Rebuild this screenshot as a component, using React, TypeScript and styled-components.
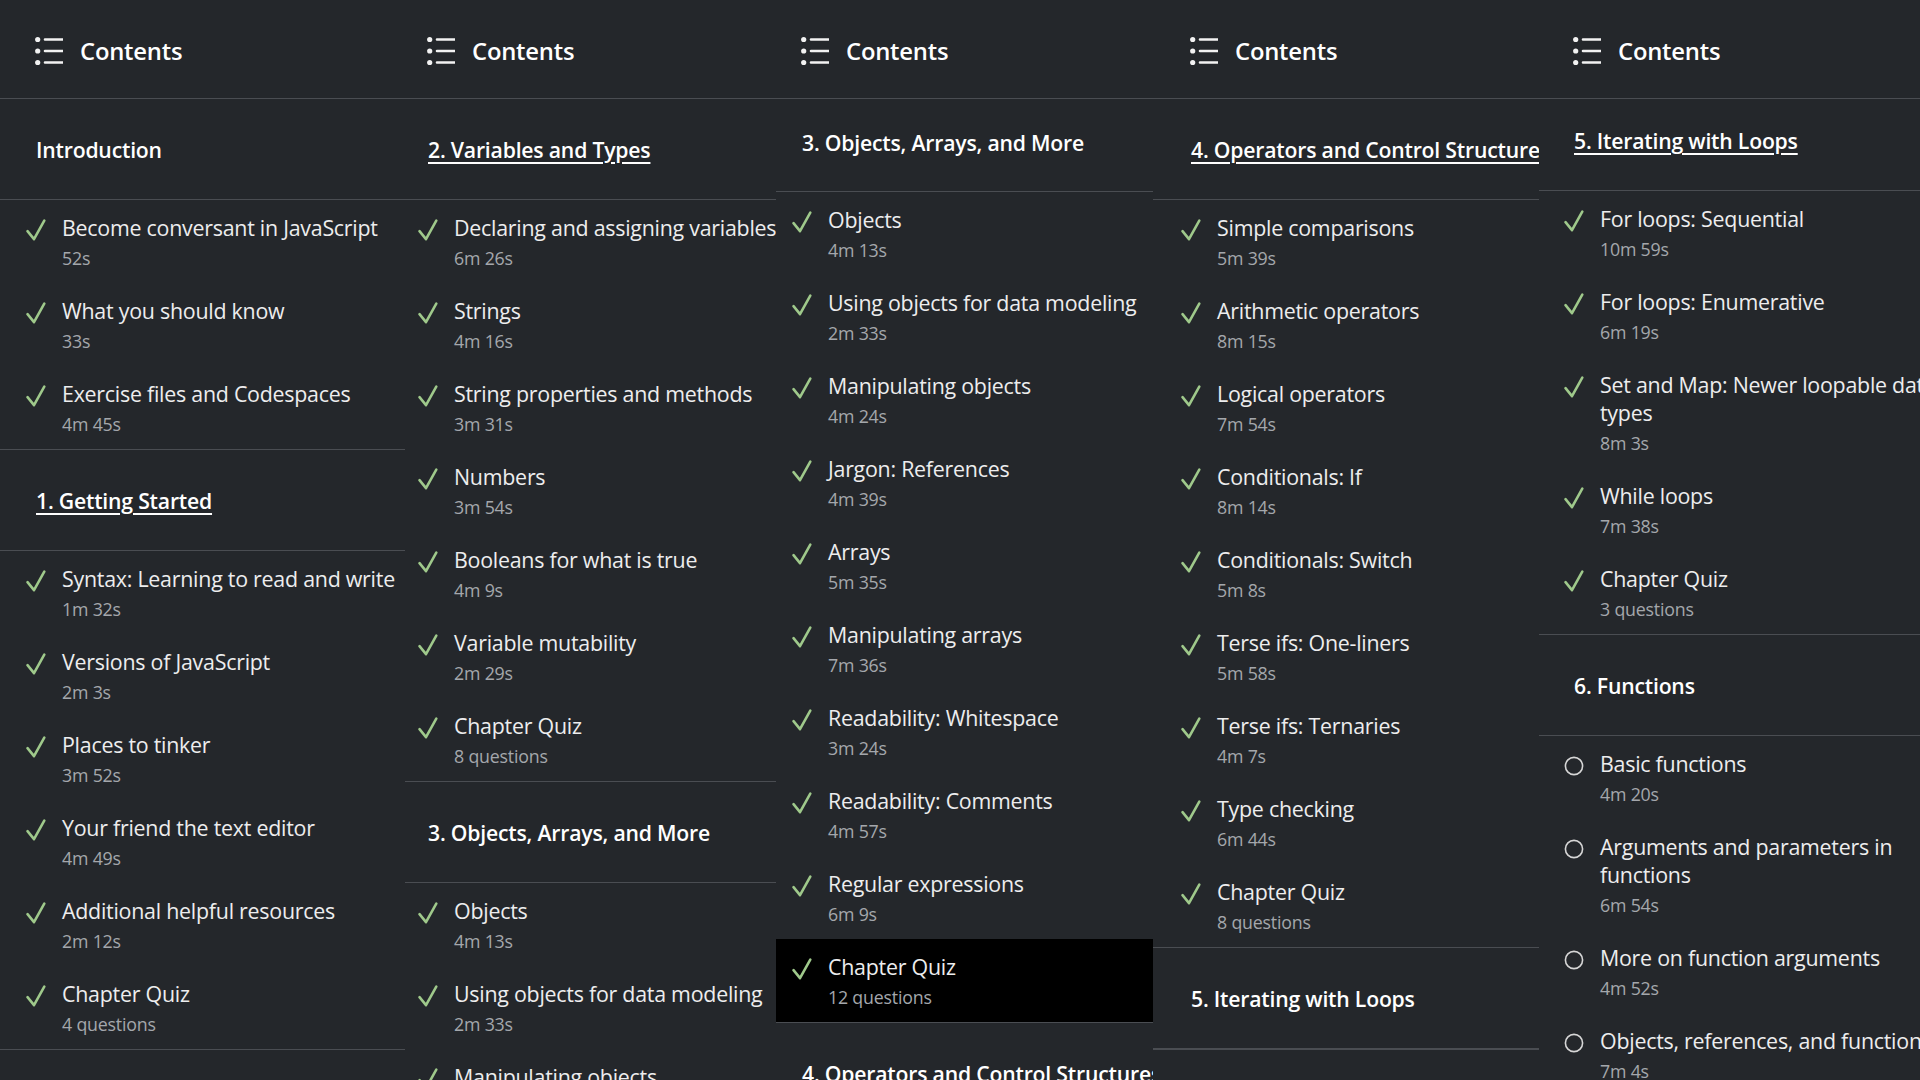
import React from 'react';
import styled, { createGlobalStyle } from 'styled-components';

const GlobalStyle = createGlobalStyle`
  html, body {
    margin: 0;
    padding: 0;
    background: #24272b;
  }
  body {
    font-family: "Open Sans", "Noto Sans", "Liberation Sans", sans-serif;
    -webkit-font-smoothing: antialiased;
  }
`;

type Lesson = { title: string; meta: string; done?: boolean; active?: boolean };
type Chapter = { title: string; link?: boolean; head?: number; lift?: number; lessons: Lesson[] };
type Strip = { width: number; shift: number; panel: number; chapters: Chapter[] };

const Page = styled.div`
  display: flex;
  width: 1920px;
  height: 1080px;
  overflow: hidden;
  background: #24272b;
  color: #ececec;
`;

const Column = styled.section<{ $w: number; $shift: number }>`
  --shift: ${p => p.$shift}px;
  flex: none;
  width: ${p => p.$w}px;
  height: 1080px;
  overflow: hidden;
`;

const Track = styled.div<{ $panel: number }>`
  width: ${p => p.$panel}px;
  display: flex;
  flex-direction: column;
`;

const Header = styled.header`
  height: 99px;
  display: flex;
  align-items: center;
  gap: 17px;
  box-sizing: border-box;
  padding-top: 4px;
  padding-left: calc(35px + var(--shift));
  border-bottom: 1px solid #4a4d52;
`;

const HeaderTitle = styled.h2`
  margin: 0;
  font-size: 23.8px;
  font-weight: 600;
  color: #ffffff;
  letter-spacing: -0.2px;
`;

const ChapterBox = styled.div`
  border-bottom: 1px solid #4a4d52;
`;

const SectionHead = styled.div<{ $h: number; $lift: number }>`
  height: ${p => p.$h}px;
  display: flex;
  align-items: center;
  box-sizing: border-box;
  padding-left: calc(36px + var(--shift));
  padding-bottom: ${p => p.$lift}px;
  border-bottom: 1px solid #4a4d52;
  white-space: nowrap;
`;

const SectionTitle = styled.h3<{ $link?: boolean }>`
  margin: 0;
  font-size: 21.2px;
  font-weight: 600;
  color: #ffffff;
  letter-spacing: -0.2px;
  text-decoration: ${p => (p.$link ? 'underline' : 'none')};
  text-decoration-thickness: 1.5px;
  text-underline-offset: 4px;
`;

const Row = styled.div<{ $active?: boolean }>`
  display: flex;
  gap: 16px;
  padding: 14px 20px 11px calc(26px + var(--shift));
  min-height: 58px;
  background: ${p => (p.$active ? '#000000' : 'transparent')};
`;

const Mark = styled.span`
  flex: none;
  width: 20px;
  height: 28px;
  display: flex;
  align-items: center;
  justify-content: center;
  padding-top: 3px;
  box-sizing: border-box;
`;

const Body = styled.div`
  display: flex;
  flex-direction: column;
  gap: 2px;
  min-width: 0;
`;

const LessonTitle = styled.div`
  font-size: 21.4px;
  line-height: 28px;
  color: #ededee;
  letter-spacing: -0.25px;
`;

const LessonMeta = styled.div`
  font-size: 17.8px;
  line-height: 28px;
  color: #a4a7ac;
  letter-spacing: -0.2px;
`;

const ListIcon = () => (
  <svg width="28" height="30" viewBox="0 0 28 30" fill="none">
    <circle cx="2.7" cy="3.5" r="2.6" fill="#f2f2f2" />
    <circle cx="2.7" cy="15" r="2.6" fill="#f2f2f2" />
    <circle cx="2.7" cy="26.5" r="2.6" fill="#f2f2f2" />
    <path d="M10 3.5H27.5M10 15H27.5M10 26.5H27.5" stroke="#f2f2f2" strokeWidth="2.6" strokeLinecap="round" />
  </svg>
);

const CheckIcon = () => (
  <svg width="21" height="24" viewBox="0 0 21 24" fill="none">
    <path d="M1.6 13.2L8.4 21.6L19.2 2.2" stroke="#9fc98b" strokeWidth="2.7" strokeLinecap="round" strokeLinejoin="round" />
  </svg>
);

const CircleIcon = () => (
  <svg width="20" height="20" viewBox="0 0 20 20" fill="none">
    <circle cx="10" cy="10" r="8.6" stroke="#d6d6d6" strokeWidth="1.6" />
  </svg>
);

const strips: Strip[] = [
  {
    width: 405,
    shift: 0,
    panel: 430,
    chapters: [
      {
        title: 'Introduction',
        lessons: [
          { title: 'Become conversant in JavaScript', meta: '52s', done: true },
          { title: 'What you should know', meta: '33s', done: true },
          { title: 'Exercise files and Codespaces', meta: '4m 45s', done: true },
        ],
      },
      {
        title: '1. Getting Started',
        link: true,
        lessons: [
          { title: 'Syntax: Learning to read and write', meta: '1m 32s', done: true },
          { title: 'Versions of JavaScript', meta: '2m 3s', done: true },
          { title: 'Places to tinker', meta: '3m 52s', done: true },
          { title: 'Your friend the text editor', meta: '4m 49s', done: true },
          { title: 'Additional helpful resources', meta: '2m 12s', done: true },
          { title: 'Chapter Quiz', meta: '4 questions', done: true },
        ],
      },
      { title: '2. Variables and Types', link: true, lessons: [] },
    ],
  },
  {
    width: 371,
    shift: -13,
    panel: 440,
    chapters: [
      {
        title: '2. Variables and Types',
        link: true,
        lessons: [
          { title: 'Declaring and assigning variables', meta: '6m 26s', done: true },
          { title: 'Strings', meta: '4m 16s', done: true },
          { title: 'String properties and methods', meta: '3m 31s', done: true },
          { title: 'Numbers', meta: '3m 54s', done: true },
          { title: 'Booleans for what is true', meta: '4m 9s', done: true },
          { title: 'Variable mutability', meta: '2m 29s', done: true },
          { title: 'Chapter Quiz', meta: '8 questions', done: true },
        ],
      },
      {
        title: '3. Objects, Arrays, and More',
        lessons: [
          { title: 'Objects', meta: '4m 13s', done: true },
          { title: 'Using objects for data modeling', meta: '2m 33s', done: true },
          { title: 'Manipulating objects', meta: '4m 24s', done: true },
        ],
      },
    ],
  },
  {
    width: 377,
    shift: -10,
    panel: 440,
    chapters: [
      {
        title: '3. Objects, Arrays, and More',
        head: 93,
        lift: 6,
        lessons: [
          { title: 'Objects', meta: '4m 13s', done: true },
          { title: 'Using objects for data modeling', meta: '2m 33s', done: true },
          { title: 'Manipulating objects', meta: '4m 24s', done: true },
          { title: 'Jargon: References', meta: '4m 39s', done: true },
          { title: 'Arrays', meta: '5m 35s', done: true },
          { title: 'Manipulating arrays', meta: '7m 36s', done: true },
          { title: 'Readability: Whitespace', meta: '3m 24s', done: true },
          { title: 'Readability: Comments', meta: '4m 57s', done: true },
          { title: 'Regular expressions', meta: '6m 9s', done: true },
          { title: 'Chapter Quiz', meta: '12 questions', done: true, active: true },
        ],
      },
      { title: '4. Operators and Control Structures', lessons: [] },
    ],
  },
  {
    width: 386,
    shift: 2,
    panel: 440,
    chapters: [
      {
        title: '4. Operators and Control Structures',
        link: true,
        lessons: [
          { title: 'Simple comparisons', meta: '5m 39s', done: true },
          { title: 'Arithmetic operators', meta: '8m 15s', done: true },
          { title: 'Logical operators', meta: '7m 54s', done: true },
          { title: 'Conditionals: If', meta: '8m 14s', done: true },
          { title: 'Conditionals: Switch', meta: '5m 8s', done: true },
          { title: 'Terse ifs: One-liners', meta: '5m 58s', done: true },
          { title: 'Terse ifs: Ternaries', meta: '4m 7s', done: true },
          { title: 'Type checking', meta: '6m 44s', done: true },
          { title: 'Chapter Quiz', meta: '8 questions', done: true },
        ],
      },
      { title: '5. Iterating with Loops', lessons: [] },
    ],
  },
  {
    width: 381,
    shift: -1,
    panel: 440,
    chapters: [
      {
        title: '5. Iterating with Loops',
        link: true,
        head: 92,
        lift: 8,
        lessons: [
          { title: 'For loops: Sequential', meta: '10m 59s', done: true },
          { title: 'For loops: Enumerative', meta: '6m 19s', done: true },
          { title: 'Set and Map: Newer loopable data types', meta: '8m 3s', done: true },
          { title: 'While loops', meta: '7m 38s', done: true },
          { title: 'Chapter Quiz', meta: '3 questions', done: true },
        ],
      },
      {
        title: '6. Functions',
        lessons: [
          { title: 'Basic functions', meta: '4m 20s' },
          { title: 'Arguments and parameters in functions', meta: '6m 54s' },
          { title: 'More on function arguments', meta: '4m 52s' },
          { title: 'Objects, references, and functions', meta: '7m 4s' },
        ],
      },
    ],
  },
];

const App: React.FC = () => (
  <>
    <GlobalStyle />
    <Page>
      {strips.map((strip, i) => (
        <Column key={i} $w={strip.width} $shift={strip.shift}>
          <Track $panel={strip.panel}>
            <Header>
              <ListIcon />
              <HeaderTitle>Contents</HeaderTitle>
            </Header>
            {strip.chapters.map(ch => (
              <ChapterBox key={ch.title}>
                <SectionHead $h={ch.head ?? 101} $lift={ch.lift ?? 0}>
                  <SectionTitle $link={ch.link}>{ch.title}</SectionTitle>
                </SectionHead>
                {ch.lessons.map(l => (
                  <Row key={l.title} $active={l.active}>
                    <Mark>{l.done ? <CheckIcon /> : <CircleIcon />}</Mark>
                    <Body>
                      <LessonTitle>{l.title}</LessonTitle>
                      <LessonMeta>{l.meta}</LessonMeta>
                    </Body>
                  </Row>
                ))}
              </ChapterBox>
            ))}
          </Track>
        </Column>
      ))}
    </Page>
  </>
);

export default App;
